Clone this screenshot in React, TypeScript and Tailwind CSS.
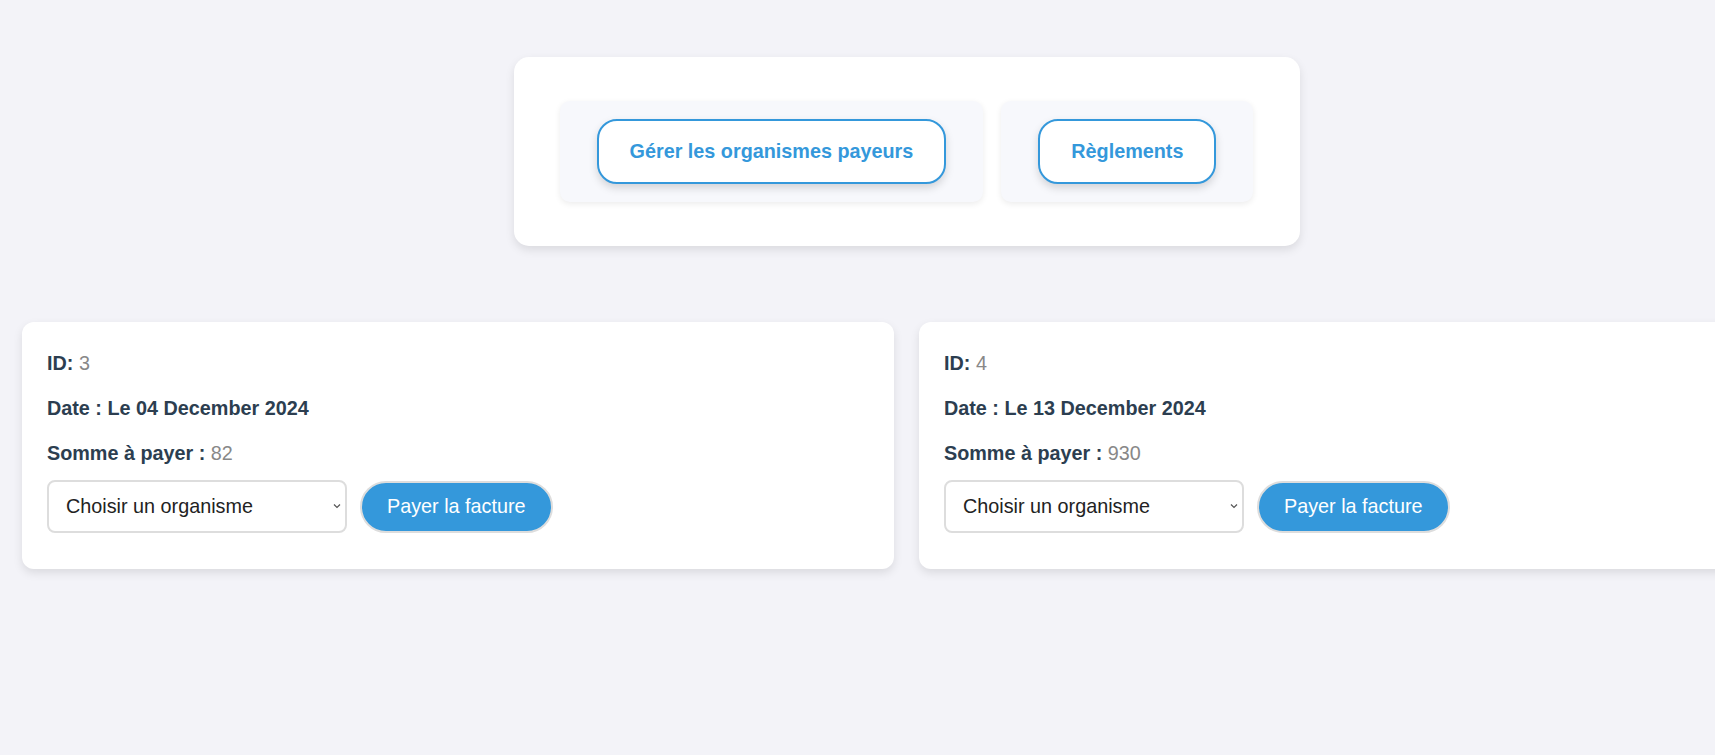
const factures = [
  { id: 3, date: "Le 04 December 2024", somme: 82 },
  { id: 4, date: "Le 13 December 2024", somme: 930 },
];

function NavButton({ label }: { label: string }) {
  return (
    <div className="rounded-[10px] bg-[#f7f8fc] px-[37px] py-[18px] shadow-[0_2px_6px_rgba(0,0,0,0.08)]">
      <button className="h-[65px] rounded-[20px] border-2 border-[#3498db] bg-white px-[31px] text-[19.8px] font-bold text-[#3498db] shadow-[0_4px_8px_rgba(0,0,0,0.15)]">
        {label}
      </button>
    </div>
  );
}

function FactureCard({ id, date, somme }: { id: number; date: string; somme: number }) {
  return (
    <div className="h-[247px] rounded-[12px] bg-white px-[25px] pt-[19px] shadow-[0_4px_10px_rgba(0,0,0,0.1)]">
      <p className="h-[45px] leading-[45px] text-[19.8px] text-[#2c3e50]">
        <span className="font-bold">ID:</span> <span className="text-[#888]">{id}</span>
      </p>
      <p className="h-[45px] leading-[45px] text-[19.8px] font-bold text-[#2c3e50]">Date : {date}</p>
      <p className="h-[45px] leading-[45px] text-[19.8px] text-[#2c3e50]">
        <span className="font-bold">Somme à payer :</span> <span className="text-[#888]">{somme}</span>
      </p>
      <div className="mt-[4px] flex items-center gap-[13px]">
        <div className="relative">
          <select className="h-[53px] w-[300px] appearance-none rounded-[8px] border-2 border-[#ddd] bg-white pl-[17px] pr-[24px] text-[19.8px] text-[#222]">
            <option>Choisir un organisme</option>
          </select>
          <svg
            className="pointer-events-none absolute right-[6px] top-[23px]"
            width="8"
            height="6"
            viewBox="0 0 8 6"
            fill="none"
          >
            <path d="M1 1.5l3 3 3-3" stroke="#555" strokeWidth="1.2" />
          </svg>
        </div>
        <button className="h-[52px] rounded-full border-2 border-[#ddd] bg-[#3498db] px-[25px] text-[19.8px] text-white">
          Payer la facture
        </button>
      </div>
    </div>
  );
}

export default function App() {
  return (
    <div className="min-h-[755px] w-[1813px] bg-[#f3f3f8] pt-[57px] [font-family:'Liberation_Sans',Arial,sans-serif]">
      <div className="mx-auto flex w-[786px] justify-center gap-[18px] rounded-[15px] bg-white py-[44px] shadow-[0_4px_10px_rgba(0,0,0,0.1)]">
        <NavButton label="Gérer les organismes payeurs" />
        <NavButton label="Règlements" />
      </div>
      <div className="mt-[76px] grid grid-cols-2 gap-[25px] px-[22px]">
        {factures.map((f) => (
          <FactureCard key={f.id} {...f} />
        ))}
      </div>
    </div>
  );
}
